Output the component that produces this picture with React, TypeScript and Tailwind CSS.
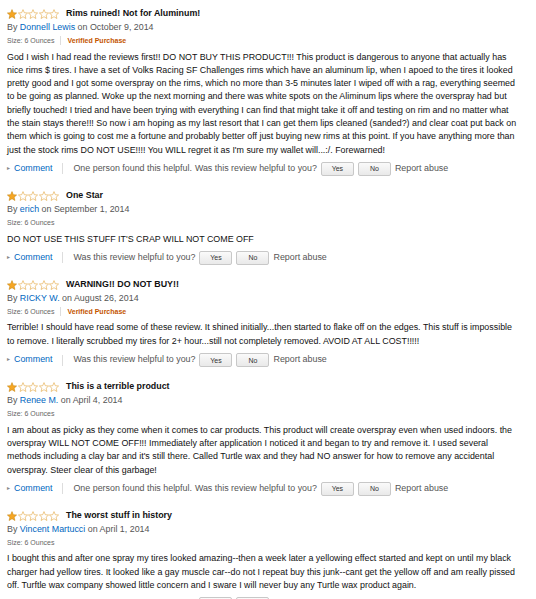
import React from "react";

interface Review {
  title: string;
  author: string;
  date: string;
  verified: boolean;
  body: string;
  helpful?: string;
}

const reviews: Review[] = [
  {
    title: "Rims ruined! Not for Aluminum!",
    author: "Donnell Lewis",
    date: "October 9, 2014",
    verified: true,
    body: "God I wish I had read the reviews first!! DO NOT BUY THIS PRODUCT!!! This product is dangerous to anyone that actually has nice rims $ tires. I have a set of Volks Racing SF Challenges rims which have an aluminum lip, when I apoed to the tires it looked pretty good and I got some overspray on the rims, which no more than 3-5 minutes later I wiped off with a rag, everything seemed to be going as planned. Woke up the next morning and there was white spots on the Aliminum lips where the overspray had but briefly touched! I tried and have been trying with everything I can find that might take it off and testing on rim and no matter what the stain stays there!!! So now i am hoping as my last resort that I can get them lips cleaned (sanded?) and clear coat put back on them which is going to cost me a fortune and probably better off just buying new rims at this point. If you have anything more than just the stock rims DO NOT USE!!!! You WILL regret it as I'm sure my wallet will...:/. Forewarned!",
    helpful: "One person found this helpful.",
  },
  {
    title: "One Star",
    author: "erich",
    date: "September 1, 2014",
    verified: false,
    body: "DO NOT USE THIS STUFF IT'S CRAP WILL NOT COME OFF",
  },
  {
    title: "WARNING!! DO NOT BUY!!",
    author: "RICKY W.",
    date: "August 26, 2014",
    verified: true,
    body: "Terrible! I should have read some of these review. It shined initially...then started to flake off on the edges. This stuff is impossible to remove. I literally scrubbed my tires for 2+ hour...still not completely removed. AVOID AT ALL COST!!!!!",
  },
  {
    title: "This is a terrible product",
    author: "Renee M.",
    date: "April 4, 2014",
    verified: false,
    body: "I am about as picky as they come when it comes to car products. This product will create overspray even when used indoors. the overspray WILL NOT COME OFF!!! Immediately after application I noticed it and began to try and remove it. I used several methods including a clay bar and it's still there. Called Turtle wax and they had NO answer for how to remove any accidental overspray. Steer clear of this garbage!",
    helpful: "One person found this helpful.",
  },
  {
    title: "The worst stuff in history",
    author: "Vincent Martucci",
    date: "April 1, 2014",
    verified: false,
    body: "I bought this and after one spray my tires looked amazing--then a week later a yellowing effect started and kept on until my black charger had yellow tires. It looked like a gay muscle car--do not I repeat buy this junk--cant get the yellow off and am really pissed off. Turftle wax company showed little concern and I sware I will never buy any Turtle wax product again.",
  },
];

const STAR = "M5 0.6l1.3 3.1 3.3 0.3-2.5 2.2 0.8 3.3L5 7.7 2.1 9.5l0.8-3.3L0.4 4l3.3-0.3z";

const Stars = () => (
  <div className="flex items-center gap-[0.5px]">
    {[0, 1, 2, 3, 4].map((i) => (
      <svg key={i} width="10" height="10" viewBox="0 0 10 10">
        <path
          d={STAR}
          fill={i === 0 ? "#f6a623" : "#ffffff"}
          stroke={i === 0 ? "#c98a16" : "#e3a640"}
          strokeWidth="0.6"
          strokeLinejoin="round"
        />
      </svg>
    ))}
  </div>
);

const Btn = ({ label }: { label: string }) => (
  <button className="h-[14px] w-[33px] rounded-[2px] border border-[#c8c8c8] bg-gradient-to-b from-[#fafafa] to-[#e9e9e9] text-[7px] leading-none text-[#333]">
    {label}
  </button>
);

export default function App() {
  return (
    <div
      className="w-[536px] h-[599px] overflow-hidden bg-white px-[7px] pt-[7px] text-[8.9px] leading-[13.3px] text-[#222]"
      style={{ fontFamily: '"Liberation Sans", Arial, sans-serif' }}
    >
      {reviews.map((r) => (
        <div key={r.title} className="mb-[13px]">
          <div className="flex h-[14px] items-center gap-[7px]">
            <Stars />
            <span className="font-bold text-[#111]">{r.title}</span>
          </div>
          <div className="text-[#555]">
            By <span className="text-[#0066c0]">{r.author}</span> on {r.date}
          </div>
          <div className="flex items-center text-[7px] text-[#666]">
            <span>Size: 6 Ounces</span>
            {r.verified && (
              <>
                <span className="mx-[6px] h-[9px] w-px bg-[#ddd]" />
                <span className="font-bold text-[#c45500]">Verified Purchase</span>
              </>
            )}
          </div>
          <p className="mt-[3px] pr-[12px] text-[#111]">{r.body}</p>
          <div className="mt-[5px] flex items-center text-[#555]">
            <span className="mr-[4px] text-[6px] text-[#888]">▸</span>
            <span className="text-[#0066c0]">Comment</span>
            <span className="mx-[10px] h-[11px] w-px bg-[#ddd]" />
            {r.helpful && <span className="mr-[3px]">{r.helpful}</span>}
            <span>Was this review helpful to you?</span>
            <span className="ml-[4px] flex gap-[4px]">
              <Btn label="Yes" />
              <Btn label="No" />
            </span>
            <span className="ml-[4px]">Report abuse</span>
          </div>
        </div>
      ))}
    </div>
  );
}
